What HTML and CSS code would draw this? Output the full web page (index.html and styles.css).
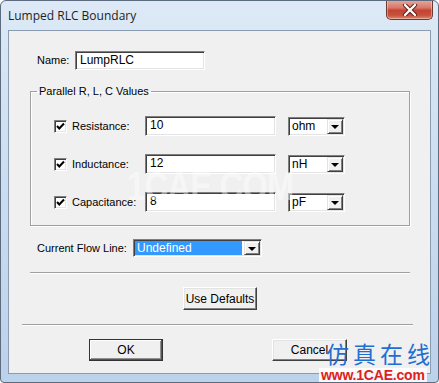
FILE: index.html
```html
<!DOCTYPE html>
<html>
<head>
<meta charset="utf-8">
<link rel="stylesheet" href="styles.css">
</head>
<body>
<div class="window">
  <div class="titlebar">
    <span class="title">Lumped RLC Boundary</span>
    <div class="close">
      <svg width="16" height="12" viewBox="0 0 16 12"><path d="M3 1 L13 11 M13 1 L3 11" stroke="#5a1d18" stroke-width="4.2" stroke-linecap="round"/><path d="M3 1 L13 11 M13 1 L3 11" stroke="#ffffff" stroke-width="2.4" stroke-linecap="round"/></svg>
    </div>
  </div>
  <div class="client">
    <div class="name-row">
      <span class="lbl name-lbl">Name:</span>
      <div class="textbox name-box">LumpRLC</div>
    </div>
    <fieldset class="group">
      <legend class="legend">Parallel R, L, C Values</legend>
      <div class="rows">
        <div class="row">
          <span class="check"><svg width="9" height="9" viewBox="0 0 9 9"><path d="M1 4 L3.3 6.5 L8 1.5" stroke="#000" stroke-width="2" fill="none"/></svg></span>
          <span class="lbl row-lbl">Resistance:</span>
          <div class="textbox val">10</div>
          <div class="combo unit"><span class="combo-text">ohm</span><span class="combo-btn"><span class="arrow"></span></span></div>
        </div>
        <div class="row">
          <span class="check"><svg width="9" height="9" viewBox="0 0 9 9"><path d="M1 4 L3.3 6.5 L8 1.5" stroke="#000" stroke-width="2" fill="none"/></svg></span>
          <span class="lbl row-lbl">Inductance:</span>
          <div class="textbox val">12</div>
          <div class="combo unit"><span class="combo-text">nH</span><span class="combo-btn"><span class="arrow"></span></span></div>
        </div>
        <div class="row">
          <span class="check"><svg width="9" height="9" viewBox="0 0 9 9"><path d="M1 4 L3.3 6.5 L8 1.5" stroke="#000" stroke-width="2" fill="none"/></svg></span>
          <span class="lbl row-lbl">Capacitance:</span>
          <div class="textbox val">8</div>
          <div class="combo unit"><span class="combo-text">pF</span><span class="combo-btn"><span class="arrow"></span></span></div>
        </div>
      </div>
    </fieldset>
    <div class="flow-row">
      <span class="lbl flow-lbl">Current Flow Line:</span>
      <div class="combo flow"><span class="combo-text selected">Undefined</span><span class="combo-btn"><span class="arrow"></span></span></div>
    </div>
    <div class="sep sep1"></div>
    <div class="btn-row center-row"><div class="btn defaults">Use Defaults</div></div>
    <div class="sep sep2"></div>
    <div class="btn-row ok-row"><div class="btn ok">OK</div><div class="btn cancel">Cancel</div></div>
  </div>
  <div class="wm-mid">1CAE.COM</div>
  <div class="wm-cn">仿真在线</div>
  <div class="wm-url">www.1CAE.com</div>
</div>
</body>
</html>
```

FILE: styles.css
```css
html, body {
  margin: 0;
  padding: 0;
  background: #ffffff;
}
.window {
  position: relative;
  width: 439px;
  height: 383px;
  box-sizing: border-box;
  border: 1px solid #5c6c7e;
  border-radius: 6px 6px 4px 4px;
  background: linear-gradient(180deg, #dde9f6 0%, #cddff1 40%, #bcd1ea 100%);
  overflow: hidden;
  font-family: "Liberation Sans", Arial, sans-serif;
  font-size: 11px;
  color: #000;
}
.titlebar {
  height: 29px;
  display: flex;
  align-items: flex-start;
}
.title {
  font-family: "Open Sans", "Noto Sans", sans-serif;
  font-size: 12px;
  line-height: 16px;
  margin: 7px 0 0 7px;
  color: #1e1e1e;
}
.close {
  margin-left: auto;
  margin-right: 5px;
  margin-top: -1px;
  width: 47px;
  height: 20px;
  box-sizing: border-box;
  border: 1px solid #6a3a35;
  border-top: none;
  border-radius: 0 0 5px 5px;
  background: linear-gradient(180deg, #e9a99c 0%, #d8796a 40%, #c24534 55%, #c8503c 80%, #dc8a6c 100%);
  box-shadow: inset 0 0 0 1px rgba(255,255,255,0.35);
  display: flex;
  align-items: center;
  justify-content: center;
}
.client {
  margin: 0 7px;
  height: 344px;
  box-sizing: border-box;
  border: 1px solid #8c9cb0;
  background: #f0f0f0;
  display: flex;
  flex-direction: column;
}
.lbl {
  line-height: 13px;
  white-space: nowrap;
}
.name-row {
  display: flex;
  align-items: center;
  margin-top: 20px;
  padding-left: 28px;
}
.name-lbl {
  width: 38px;
}
.textbox {
  height: 19px;
  box-sizing: border-box;
  background: #fff;
  border: 1px solid;
  border-color: #7f7f7f #ffffff #ffffff #7f7f7f;
  box-shadow: inset 1px 1px 0 #404040, inset -1px -1px 0 #e3e3e3;
  padding-left: 4px;
  line-height: 17px;
  font-size: 12px;
}
.name-box {
  width: 130px;
}
.group {
  margin: 15px 0 0 21px;
  width: 380px;
  box-sizing: border-box;
  padding: 0;
  border: 1px solid #a0a0a0;
  box-shadow: 1px 1px 0 #ffffff, inset 1px 1px 0 #ffffff;
  min-width: 0;
}
.legend {
  margin-left: 6px;
  padding: 0 2px;
  line-height: 13px;
}
.rows {
  display: flex;
  flex-direction: column;
  gap: 18px;
  padding: 18px 0 13px 23px;
}
.row {
  display: flex;
  align-items: center;
  height: 20px;
}
.check {
  width: 13px;
  height: 13px;
  box-sizing: border-box;
  background: #fff;
  border: 1px solid;
  border-color: #7f7f7f #ffffff #ffffff #7f7f7f;
  box-shadow: inset 1px 1px 0 #404040, inset -1px -1px 0 #e3e3e3;
  display: flex;
  align-items: center;
  justify-content: center;
}
.row-lbl {
  margin-left: 5px;
  width: 73px;
}
.val {
  width: 131px;
  height: 20px;
}
.combo {
  height: 19px;
  box-sizing: border-box;
  background: #fff;
  border: 1px solid;
  border-color: #7f7f7f #ffffff #ffffff #7f7f7f;
  box-shadow: inset 1px 1px 0 #404040, inset -1px -1px 0 #e3e3e3;
  display: flex;
  align-items: stretch;
  padding: 1px 1px 1px 1px;
}
.unit {
  width: 57px;
  margin-left: 12px;
}
.combo-text {
  flex: 1;
  padding-left: 2px;
  line-height: 15px;
  font-size: 12px;
}
.combo-text.selected {
  background: #3399ff;
  color: #fff;
  margin-right: 2px;
}
.combo-btn {
  width: 16px;
  box-sizing: border-box;
  background: #f0f0f0;
  border: 1px solid;
  border-color: #e3e3e3 #404040 #404040 #e3e3e3;
  box-shadow: inset 1px 1px 0 #ffffff, inset -1px -1px 0 #808080;
  display: flex;
  align-items: center;
  justify-content: center;
}
.arrow {
  width: 0;
  height: 0;
  border-left: 4px solid transparent;
  border-right: 4px solid transparent;
  border-top: 4px solid #000;
  margin-top: 1px;
}
.flow-row {
  display: flex;
  align-items: center;
  margin-top: 13px;
  padding-left: 28px;
}
.flow-lbl {
  width: 96px;
}
.flow {
  width: 129px;
  height: 18px;
}
.flow .combo-text {
  line-height: 14px;
}
.sep {
  height: 1px;
  background: #a0a0a0;
  box-shadow: 0 1px 0 #ffffff;
}
.sep1 {
  margin: 15px 0 0 21px;
  width: 380px;
}
.sep2 {
  margin: 14px 0 0 13px;
  width: 391px;
}
.btn-row {
  display: flex;
}
.center-row {
  justify-content: center;
  margin-top: 14px;
}
.ok-row {
  margin-top: 14px;
  padding-left: 80px;
  gap: 109px;
}
.btn {
  height: 23px;
  box-sizing: border-box;
  background: #f0f0f0;
  border: 1px solid;
  border-color: #ffffff #404040 #404040 #ffffff;
  box-shadow: inset -1px -1px 0 #808080, inset 1px 1px 0 #e3e3e3;
  display: flex;
  align-items: center;
  justify-content: center;
  font-size: 12px;
}
.defaults {
  width: 74px;
  margin-left: 1px;
}
.ok {
  width: 74px;
  height: 22px;
  border: 1px solid #333;
  box-shadow: inset -1px -1px 0 #555, inset 1px 1px 0 #fff, inset -2px -2px 0 #909090;
}
.cancel {
  width: 75px;
  height: 22px;
}
.wm-mid {
  position: absolute;
  left: 126px;
  top: 163px;
  font-family: "Liberation Sans", Arial, sans-serif;
  font-weight: bold;
  font-size: 40px;
  letter-spacing: -1px;
  transform: scaleX(0.82);
  transform-origin: left top;
  color: rgba(255, 255, 255, 0.45);
}
.wm-cn {
  position: absolute;
  left: 325px;
  top: 338px;
  font-family: "Noto Sans CJK SC", sans-serif;
  font-size: 23px;
  line-height: 28px;
  letter-spacing: 4px;
  color: #1f6fd0;
}
.wm-url {
  position: absolute;
  left: 318px;
  top: 367px;
  height: 15px;
  background: rgba(255, 255, 255, 0.85);
  font-family: "Liberation Sans", Arial, sans-serif;
  font-weight: bold;
  font-size: 14px;
  line-height: 15px;
  letter-spacing: -0.2px;
  color: #e0201a;
  padding: 0 2px;
}
```
